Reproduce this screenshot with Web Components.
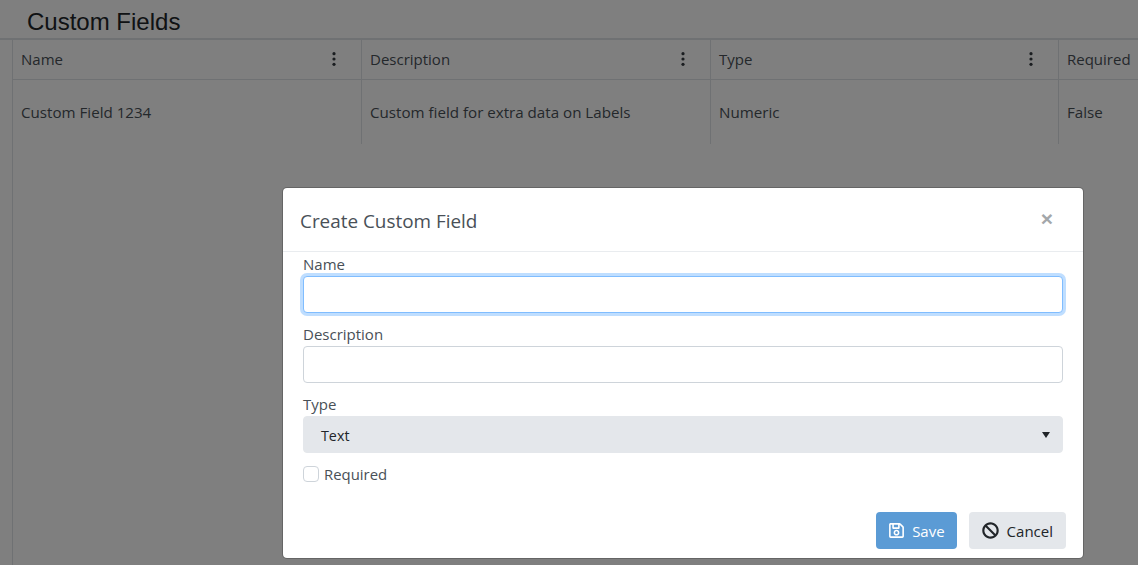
<!DOCTYPE html>
<html><head><meta charset="utf-8"><style>
html,body{margin:0;padding:0;height:565px;overflow:hidden;background:#fff}
body{font-family:"Open Sans","Noto Sans",sans-serif;color:#495057}
</style></head><body>
<template id="t-page"><style>
:host{display:block;height:565px;position:relative;overflow:hidden;background:#fff}
h1{margin:0;box-sizing:border-box;padding:7px 0 0 27px;font:400 24px/29px "Liberation Sans",sans-serif;color:#212529;border-bottom:2px solid #dee2e6;height:40px}
.body{margin-left:12px;border-left:1px solid #dee2e6;height:525px}
</style><h1>Custom Fields</h1><div class="body"><slot name="grid"></slot></div><slot name="overlay"></slot></template>

<template id="t-grid"><style>
:host{display:grid;grid-template-columns:349px 349px 348px 200px;grid-template-rows:40px 64px;font-size:15px;width:1246px}
</style><slot></slot></template>

<template id="t-cell"><style>
:host{display:flex;align-items:center;justify-content:space-between;box-sizing:border-box;padding:0 8px;border-right:1px solid #dee2e6;white-space:nowrap;color:#495057;font-size:15.15px}
:host([head]){border-bottom:1px solid #dee2e6;padding-bottom:2px;font-size:15px}
svg{width:16px;height:16px;margin-right:11px;fill:#343a40;flex:none}
</style><span class="t"><slot></slot></span><svg id="k" viewBox="0 0 16 16"><circle cx="8" cy="2.700" r="1.600"/><circle cx="8" cy="8" r="1.600"/><circle cx="8" cy="13.300" r="1.600"/></svg></template>

<template id="t-modal"><style>
:host{position:absolute;inset:0;background:rgba(0,0,0,.5);display:block}
.dlg{position:absolute;left:282px;top:187px;width:802px;height:372px;box-sizing:border-box;background:#fff;border:1px solid rgba(0,0,0,.2);border-radius:5px;background-clip:padding-box;display:flex;flex-direction:column}
header{height:64px;box-sizing:border-box;border-bottom:1px solid #e9ecef;display:flex;justify-content:space-between;align-items:center;padding:2px 30px 0 17px;flex:none}
h5{margin:0;font-weight:400;font-size:18.9px;color:#495057}
.x{font:700 21px/1 "Liberation Sans",sans-serif;color:#a3a7aa;position:relative;top:-2px}
.content{padding:0 20px;flex:1}
footer{display:flex;justify-content:flex-end;gap:12px;padding:0 17px 9px}
</style><div class="dlg"><header><h5><slot name="title"></slot></h5><span class="x">×</span></header><div class="content"><slot></slot></div><footer><slot name="footer"></slot></footer></div></template>

<template id="t-field"><style>
:host{display:block;height:70px;font-size:15px}
label{display:block;height:24px;line-height:24px;color:#495057}
.i{box-sizing:border-box;height:37px;width:760px;border:1px solid #ced4da;border-radius:4px;background:#fff;display:flex;align-items:center;justify-content:space-between;padding:0 12px 0 17px;color:#212529}
:host([focus]) .i{border-color:#80bdff;box-shadow:0 0 0 3px rgba(0,123,255,.25)}
:host([select]) .i{background:#e4e7eb;border-color:#e4e7eb;font-size:14.3px;padding-top:1px}
.c{width:0;height:0;border-left:4px solid transparent;border-right:4px solid transparent;border-top:6px solid #212529;display:none}
:host([select]) .c{display:block}
</style><label id="l"></label><div class="i"><span><slot></slot></span><span class="c"></span></div></template>

<template id="t-check"><style>
:host{display:flex;align-items:center;gap:5px;height:24px;font-size:14.9px;color:#495057}
.b{width:14px;height:14px;border:1px solid #ced4da;border-radius:4px;box-sizing:content-box}
</style><span class="b"></span><slot></slot></template>

<template id="t-btn"><style>
:host{display:inline-flex;align-items:center;box-sizing:border-box;height:37px;border-radius:4px;padding:0 13px;font-size:15px;gap:8px;background:#e4e7eb;color:#212529}
:host([primary]){background:#5b9bd5;color:#fff;padding:0 12px 0 13px}
svg{height:17px;fill:currentColor;flex:none}
</style><svg id="s"><path id="p"/></svg><slot></slot></template>

<x-page>
<x-grid slot="grid">
<x-cell head kebab>Name</x-cell><x-cell head kebab>Description</x-cell><x-cell head kebab>Type</x-cell><x-cell head>Required</x-cell>
<x-cell>Custom Field 1234</x-cell><x-cell>Custom field for extra data on Labels</x-cell><x-cell>Numeric</x-cell><x-cell>False</x-cell>
</x-grid>
<x-modal slot="overlay">
<span slot="title">Create Custom Field</span>
<x-field label="Name" focus></x-field>
<x-field label="Description"></x-field>
<x-field label="Type" select>Text</x-field>
<x-check>Required</x-check>
<x-btn slot="footer" primary icon="save">Save</x-btn>
<x-btn slot="footer" icon="ban">Cancel</x-btn>
</x-modal>
</x-page>
<script>
const ICONS={save:["0 0 448 512",15,"M433.941 129.941l-83.882-83.882A48 48 0 0 0 316.118 32H48C21.49 32 0 53.49 0 80v352c0 26.51 21.49 48 48 48h352c26.51 0 48-21.49 48-48V163.882a48 48 0 0 0-14.059-33.941zM272 80v80H144V80h128zm122 352H54a6 6 0 0 1-6-6V86a6 6 0 0 1 6-6h42v104c0 13.255 10.745 24 24 24h176c13.255 0 24-10.745 24-24V83.882l78.243 78.243a6 6 0 0 1 1.757 4.243V426a6 6 0 0 1-6 6zM224 232c-48.523 0-88 39.477-88 88s39.477 88 88 88 88-39.477 88-88-39.477-88-88-88zm0 128c-22.056 0-40-17.944-40-40s17.944-40 40-40 40 17.944 40 40-17.944 40-40 40z"],
ban:["0 0 512 512",17,"M256 8C119.034 8 8 119.033 8 256s111.034 248 248 248 248-111.034 248-248S392.967 8 256 8zm130.108 117.892c65.448 65.448 70 165.481 20.677 235.637L150.47 105.216c70.204-49.356 170.226-44.735 235.638 20.676zM125.892 386.108c-65.448-65.448-70-165.481-20.677-235.637L361.53 406.784c-70.203 49.356-170.226 44.736-235.638-20.676z"]};
function def(name,tid,init){customElements.define(name,class extends HTMLElement{constructor(){super();this.attachShadow({mode:"open"}).appendChild(document.getElementById(tid).content.cloneNode(true))}connectedCallback(){init&&init(this,this.shadowRoot)}})}
def("x-page","t-page");def("x-grid","t-grid");def("x-modal","t-modal");def("x-check","t-check");
def("x-cell","t-cell",(h,r)=>{if(!h.hasAttribute("kebab"))r.getElementById("k").remove()});
def("x-field","t-field",(h,r)=>{r.getElementById("l").textContent=h.getAttribute("label")});
def("x-btn","t-btn",(h,r)=>{const i=ICONS[h.getAttribute("icon")],s=r.getElementById("s");s.setAttribute("viewBox",i[0]);s.setAttribute("width",i[1]);r.getElementById("p").setAttribute("d",i[2])});
</script>
</body></html>
